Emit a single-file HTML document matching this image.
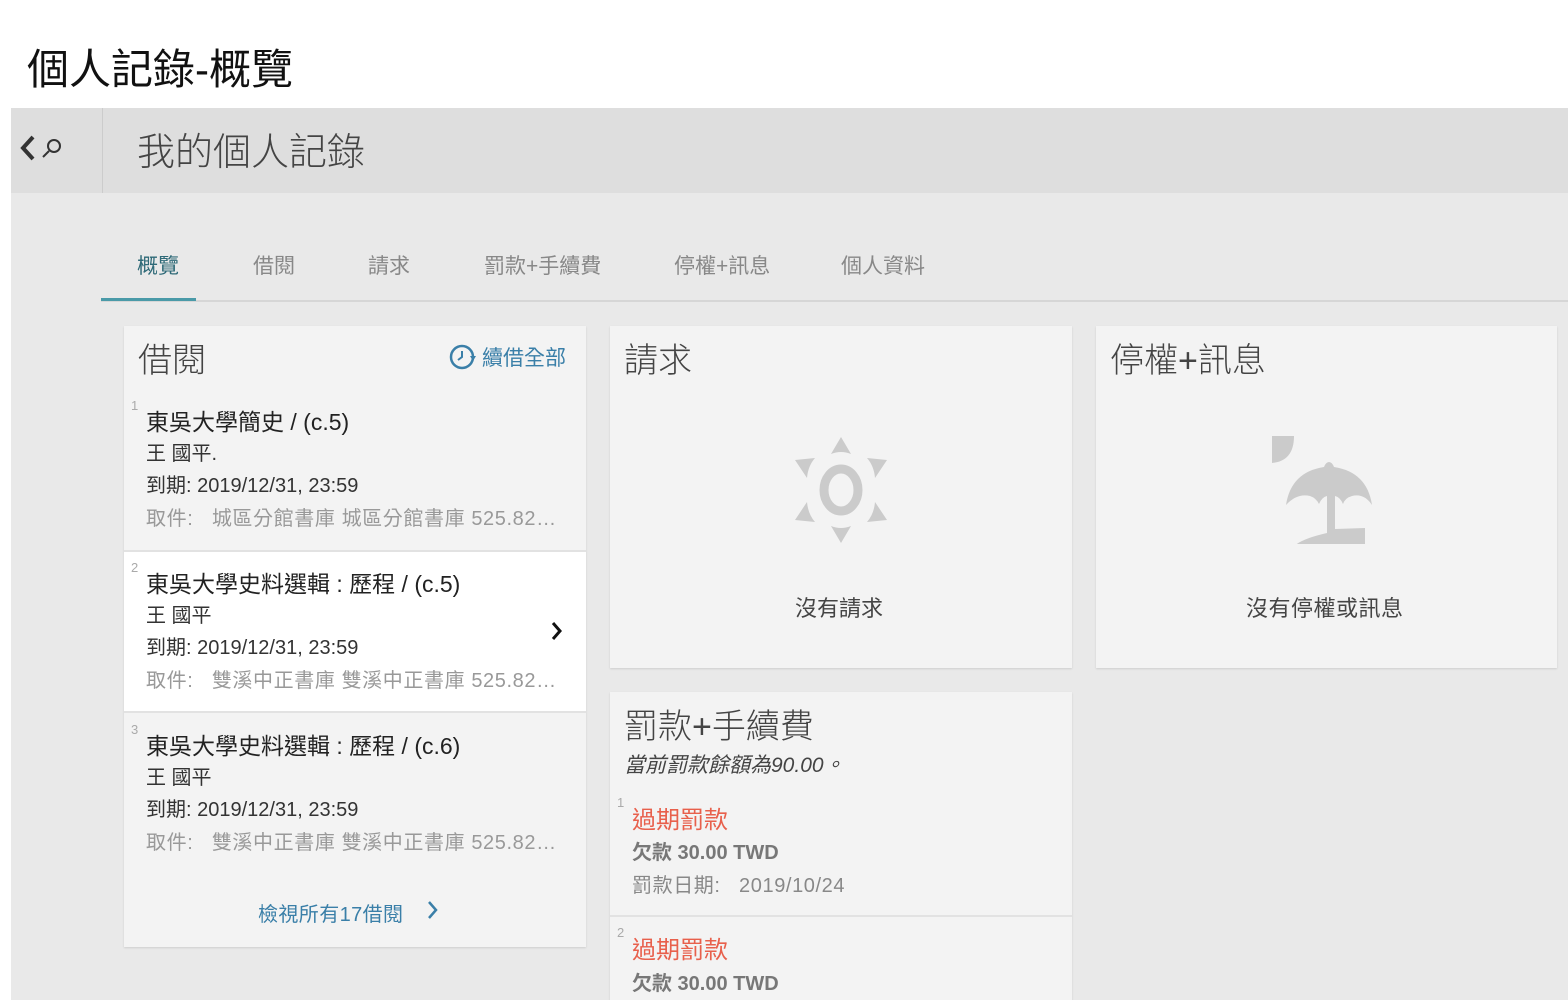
<!DOCTYPE html>
<html><head><meta charset="utf-8"><style>
*{margin:0;padding:0;box-sizing:border-box}
body{width:1568px;height:1000px;overflow:hidden;background:#fff;font-family:"Liberation Sans","Noto Sans CJK TC",sans-serif;position:relative;color:#333}
.a{position:absolute;white-space:nowrap}
.card{position:absolute;background:#f3f3f3;box-shadow:0 1px 2px rgba(0,0,0,.12)}
.h{font-size:34px;color:#444;font-weight:300}
.num{font-size:13px;color:#aaa}
.t{font-size:23px;color:#222}
.s{font-size:20px;color:#333}
.g{font-size:20px;color:#999;letter-spacing:0.6px}
.red{font-size:24px;color:#e8604c}
.b{font-size:20px;color:#777;font-weight:bold}
</style></head><body>
<div class="a" style="left:27px;top:36px;font-size:42px;color:#111">個人記錄-概覽</div>
<div class="a" style="left:11px;top:108px;width:1557px;height:892px;background:#e9e9e9"></div>
<div class="a" style="left:11px;top:108px;width:1557px;height:85px;background:#dedede"></div>
<div class="a" style="left:102px;top:108px;width:1px;height:85px;background:#ccc"></div>
<svg class="a" style="left:16px;top:132px" width="50" height="34"><path d="M17 5 L7 16 L17 27" stroke="#333" stroke-width="4" fill="none"/><circle cx="38" cy="14" r="6" stroke="#333" stroke-width="2" fill="none"/><path d="M33 19 L27 25" stroke="#333" stroke-width="2"/></svg>
<div class="a" style="left:137px;top:121px;font-size:38px;color:#444;font-weight:300">我的個人記錄</div>
<div class="a" style="left:101px;top:300px;width:1467px;height:2px;background:#d6d6d6"></div>
<div class="a" style="left:101px;top:298px;width:95px;height:3px;background:#4a9aa8"></div>
<div class="a" style="left:137px;top:250px;font-size:21px;color:#2f6a78">概覽</div>
<div class="a" style="left:253px;top:250px;font-size:21px;color:#888">借閱</div>
<div class="a" style="left:368px;top:250px;font-size:21px;color:#888">請求</div>
<div class="a" style="left:484px;top:250px;font-size:21px;color:#888">罰款+手續費</div>
<div class="a" style="left:674px;top:250px;font-size:21px;color:#888">停權+訊息</div>
<div class="a" style="left:841px;top:250px;font-size:21px;color:#888">個人資料</div>

<div class="card" style="left:124px;top:326px;width:462px;height:621px">
<div class="a h" style="left:14px;top:7px">借閱</div>
<svg class="a" style="left:324px;top:17px" width="30" height="30"><circle cx="14" cy="14" r="11" stroke="#3a7fa8" stroke-width="2.5" fill="none"/><path d="M14 8v6l-4 3" stroke="#3a7fa8" stroke-width="2" fill="none"/><path d="M22 13l6 0-3 5z" fill="#3a7fa8"/></svg>
<div class="a" style="left:358px;top:16px;font-size:21px;color:#3a7fa8">續借全部</div>
<div class="a num" style="left:7px;top:72px">1</div>
<div class="a t" style="left:22px;top:77px">東吳大學簡史 / (c.5)</div>
<div class="a s" style="left:22px;top:111px">王 國平.</div>
<div class="a s" style="left:22px;top:143px">到期: 2019/12/31, 23:59</div>
<div class="a g" style="left:22px;top:176px">取件:&nbsp;&nbsp; 城區分館書庫 城區分館書庫 525.82…</div>
<div class="a" style="left:0;top:224px;width:462px;height:163px;background:#fff;border-top:2px solid #e2e2e2;border-bottom:2px solid #e2e2e2"></div>
<div class="a num" style="left:7px;top:234px">2</div>
<div class="a t" style="left:22px;top:239px">東吳大學史料選輯 : 歷程 / (c.5)</div>
<div class="a s" style="left:22px;top:273px">王 國平</div>
<div class="a s" style="left:22px;top:305px">到期: 2019/12/31, 23:59</div>
<div class="a g" style="left:22px;top:338px">取件:&nbsp;&nbsp; 雙溪中正書庫 雙溪中正書庫 525.82…</div>
<svg class="a" style="left:426px;top:295px" width="14" height="20"><path d="M3 2l7 8-7 8" stroke="#111" stroke-width="3" fill="none"/></svg>
<div class="a num" style="left:7px;top:396px">3</div>
<div class="a t" style="left:22px;top:401px">東吳大學史料選輯 : 歷程 / (c.6)</div>
<div class="a s" style="left:22px;top:435px">王 國平</div>
<div class="a s" style="left:22px;top:467px">到期: 2019/12/31, 23:59</div>
<div class="a g" style="left:22px;top:500px">取件:&nbsp;&nbsp; 雙溪中正書庫 雙溪中正書庫 525.82…</div>
<div class="a" style="left:134px;top:572px;font-size:20px;color:#3a7fa8;letter-spacing:0.4px">檢視所有17借閱</div>
<svg class="a" style="left:302px;top:574px" width="14" height="20"><path d="M3 2l7 8-7 8" stroke="#3a7fa8" stroke-width="2.5" fill="none"/></svg>
</div>

<div class="card" style="left:610px;top:326px;width:462px;height:342px">
<div class="a h" style="left:14px;top:7px">請求</div>
<svg class="a" style="left:794px;top:110px;left:184px" width="94" height="108"><path d="M47 1l10 17q-10-4-20 0z M47 107l10-17q-10 4-20 0z M1 24l20-2q-7 8-8 20z M93 24l-20-2q7 8 8 20z M1 84l20 2q-7-8-8-20z M93 84l-20 2q7-8 8-20z" fill="#cbcbcb"/><ellipse cx="47" cy="54" rx="17" ry="21" stroke="#cbcbcb" stroke-width="9" fill="none"/></svg>
<div class="a" style="left:185px;top:265px;font-size:22px;color:#444">沒有請求</div>
</div>

<div class="card" style="left:1096px;top:326px;width:461px;height:342px">
<div class="a h" style="left:14px;top:7px">停權+訊息</div>
<svg class="a" style="left:176px;top:110px" width="114" height="108"><path d="M0 0h22q0 25-22 27z" fill="#cbcbcb"/><path d="M14 69q5-33 38-38 q2-5 5-5 q3 0 5 5 q33 5 38 38 q-8-12-20-9 q-7 2-9 8 q-3-7-8-8 v33 l30-1 v22 h-74 q5-10 36-17 v-37 q-5 1-8 8 q-3-6-9-8 q-13-3-24 9z" fill="#cbcbcb"/></svg>
<div class="a" style="left:150px;top:265px;font-size:22px;color:#444;letter-spacing:0.5px">沒有停權或訊息</div>
</div>

<div class="card" style="left:610px;top:692px;width:462px;height:308px">
<div class="a h" style="left:14px;top:7px">罰款+手續費</div>
<div class="a" style="left:14px;top:57px;font-size:21px;color:#444;font-style:italic">當前罰款餘額為90.00。</div>
<div class="a num" style="left:7px;top:103px">1</div>
<div class="a red" style="left:22px;top:108px">過期罰款</div>
<div class="a b" style="left:22px;top:144px">欠款 30.00 TWD</div>
<div class="a g" style="left:22px;top:177px;color:#888">罰款日期:&nbsp;&nbsp; 2019/10/24</div>
<div class="a" style="left:0;top:223px;width:462px;height:2px;background:#e2e2e2"></div>
<div class="a num" style="left:7px;top:233px">2</div>
<div class="a red" style="left:22px;top:238px">過期罰款</div>
<div class="a b" style="left:22px;top:275px">欠款 30.00 TWD</div>
</div>
</body></html>
